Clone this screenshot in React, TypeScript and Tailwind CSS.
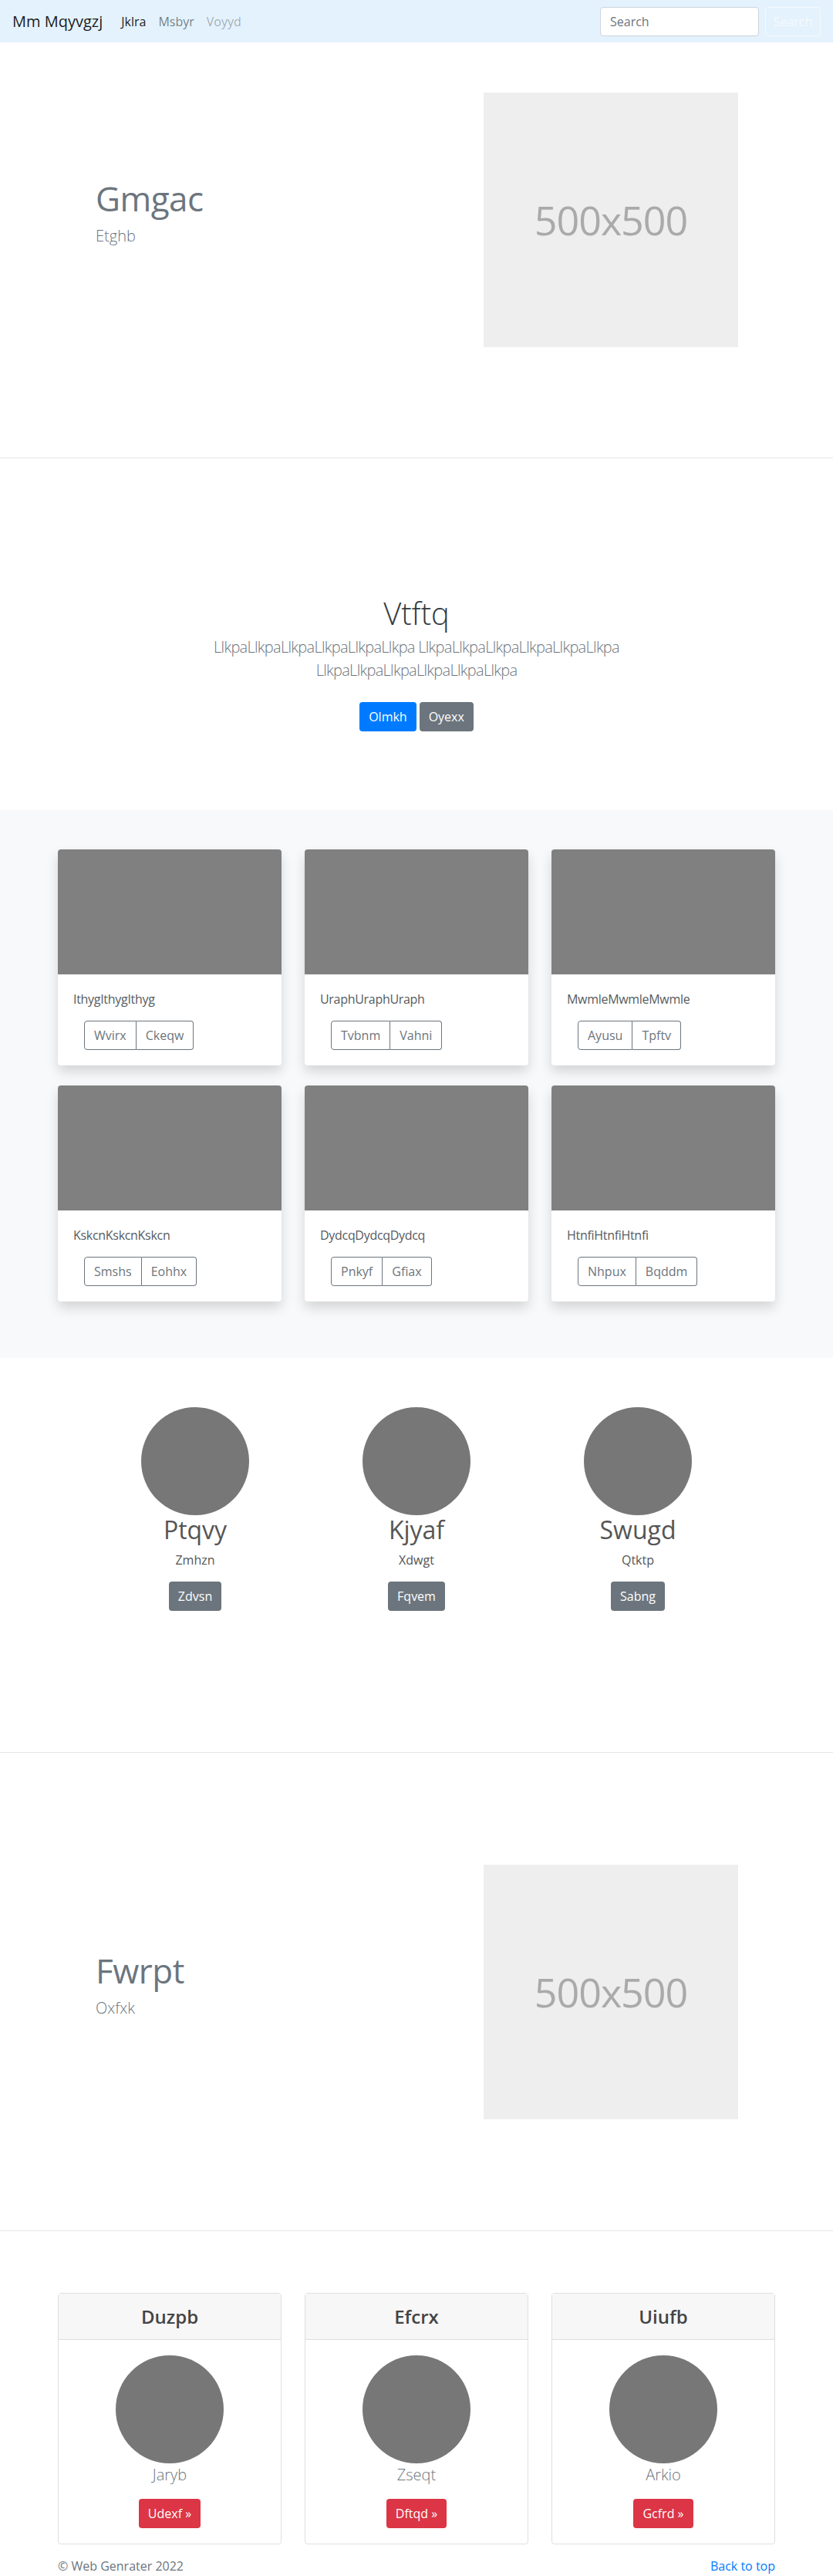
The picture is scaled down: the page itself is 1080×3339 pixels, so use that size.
import React from "react";

const cards = [
  { text: "IthygIthygIthyg", a: "Wvirx", b: "Ckeqw" },
  { text: "UraphUraphUraph", a: "Tvbnm", b: "Vahni" },
  { text: "MwmleMwmleMwmle", a: "Ayusu", b: "Tpftv" },
  { text: "KskcnKskcnKskcn", a: "Smshs", b: "Eohhx" },
  { text: "DydcqDydcqDydcq", a: "Pnkyf", b: "Gfiax" },
  { text: "HtnfiHtnfiHtnfi", a: "Nhpux", b: "Bqddm" },
];

const people = [
  { name: "Ptqvy", sub: "Zmhzn", btn: "Zdvsn" },
  { name: "Kjyaf", sub: "Xdwgt", btn: "Fqvem" },
  { name: "Swugd", sub: "Qtktp", btn: "Sabng" },
];

const plans = [
  { head: "Duzpb", name: "Jaryb", btn: "Udexf" },
  { head: "Efcrx", name: "Zseqt", btn: "Dftqd" },
  { head: "Uiufb", name: "Arkio", btn: "Gcfrd" },
];

function Hero({ title, sub, top, bottom }: { title: string; sub: string; top: string; bottom: string }) {
  return (
    <section className={`border-b border-[#e5e5e5] ${top} ${bottom}`}>
      <div className="w-[960px] mx-auto flex items-start">
        <div className="w-[567px] pl-[64px] mt-[111px]">
          <h1 className="text-[44px] leading-[1.2] text-[#6c757d] mb-[7px] tracking-[-0.5px]">{title}</h1>
          <p className="text-[20px] leading-[30px] font-light text-[#6c757d]">{sub}</p>
        </div>
        <div className="w-[330px] h-[330px] bg-[#eeeeee] flex items-center justify-center text-[52px] text-[#aaaaaa] tracking-[-1px]">
          500x500
        </div>
      </div>
    </section>
  );
}

export default function App() {
  return (
    <div className="font-['Open_Sans',sans-serif] text-[16px] leading-[24px] text-[#212529] bg-white">
      {/* navbar */}
      <nav className="h-[55px] bg-[#e3f2fd] flex items-center justify-between px-4">
        <div className="flex items-center">
          <span className="text-[20px] text-black/90 mr-4">Mm Mqyvgzj</span>
          <a className="px-2 text-black/90">Jklra</a>
          <a className="px-2 text-black/50">Msbyr</a>
          <a className="px-2 text-black/30">Voyyd</a>
        </div>
        <div className="flex items-center">
          <input
            placeholder="Search"
            className="w-[206px] h-[38px] bg-white border border-[#ced4da] rounded px-3 mr-2 placeholder:text-[#6c757d] outline-none"
          />
          <button className="w-[72px] h-[38px] border border-[#f8f9fa] rounded text-[#f8f9fa]">Search</button>
        </div>
      </nav>

      <Hero title="Gmgac" sub="Etghb" top="pt-[65px]" bottom="pb-[143px]" />

      {/* intro */}
      <section className="pt-[177px] pb-[102px] text-center">
        <h1 className="text-[40px] leading-[48px] font-light text-[#343a40] mb-[5px]">Vtftq</h1>
        <p className="text-[20px] leading-[30px] font-light text-[#6c757d] max-w-[640px] mx-auto tracking-[-0.7px]">
          LlkpaLlkpaLlkpaLlkpaLlkpaLlkpa LlkpaLlkpaLlkpaLlkpaLlkpaLlkpa LlkpaLlkpaLlkpaLlkpaLlkpaLlkpa
        </p>
        <div className="mt-[26px] flex justify-center gap-1">
          <button className="h-[38px] px-3 rounded bg-[#007bff] text-white">Olmkh</button>
          <button className="h-[38px] px-3 rounded bg-[#6c757d] text-white">Oyexx</button>
        </div>
      </section>

      {/* album */}
      <section className="bg-[#f8f9fa] pt-[51px] pb-[73px]">
        <div className="w-[960px] mx-auto px-[15px] grid grid-cols-3 gap-x-[30px] gap-y-[26px]">
          {cards.map((c) => (
            <div key={c.text} className="bg-white rounded shadow-[0_0.5rem_1rem_rgba(0,0,0,0.15)] overflow-hidden">
              <div className="h-[162px] bg-[#808080]" />
              <div className="p-5">
                <p className="text-[#555b61] mb-4 tracking-[-0.3px]">{c.text}</p>
                <div className="ml-[14px] inline-flex">
                  <button className="h-[38px] px-3 border border-[#6c757d] rounded-l text-[#6c757d]">{c.a}</button>
                  <button className="h-[38px] px-3 border border-l-0 border-[#6c757d] rounded-r text-[#6c757d]">{c.b}</button>
                </div>
              </div>
            </div>
          ))}
        </div>
      </section>

      {/* people */}
      <section className="border-b border-[#e5e5e5] pt-[64px] pb-[183px]">
        <div className="w-[861px] mx-auto grid grid-cols-3 text-center">
          {people.map((p) => (
            <div key={p.name} className="flex flex-col items-center">
              <div className="w-[140px] h-[140px] rounded-full bg-[#777777]" />
              <h2 className="text-[32px] leading-[1.2] text-[#555555] mb-2">{p.name}</h2>
              <p className="text-[#555555] mb-4">{p.sub}</p>
              <button className="h-[38px] px-3 rounded bg-[#6c757d] text-white">{p.btn}</button>
            </div>
          ))}
        </div>
      </section>

      <Hero title="Fwrpt" sub="Oxfxk" top="pt-[145px]" bottom="pb-[144px]" />

      {/* pricing */}
      <section className="pt-[80px]">
        <div className="w-[960px] mx-auto px-[15px] grid grid-cols-3 gap-x-[30px]">
          {plans.map((p) => (
            <div key={p.head} className="border border-[#dfdfdf] rounded text-center">
              <div className="h-[60px] bg-[#f7f7f7] border-b border-[#dfdfdf] flex items-center justify-center">
                <h4 className="text-[24px] font-semibold text-[#444444]">{p.head}</h4>
              </div>
              <div className="p-5 flex flex-col items-center">
                <div className="w-[140px] h-[140px] rounded-full bg-[#777777]" />
                <p className="text-[20px] leading-[30px] font-light text-[#6c757d] mb-4">{p.name}</p>
                <button className="h-[38px] px-3 rounded bg-[#dc3545] text-white">{p.btn} &raquo;</button>
              </div>
            </div>
          ))}
        </div>
        <footer className="w-[960px] mx-auto px-[15px] mt-4 flex justify-between text-[#6c757d]">
          <p>&copy; Web Genrater 2022</p>
          <a className="text-[#007bff]">Back to top</a>
        </footer>
      </section>
    </div>
  );
}
